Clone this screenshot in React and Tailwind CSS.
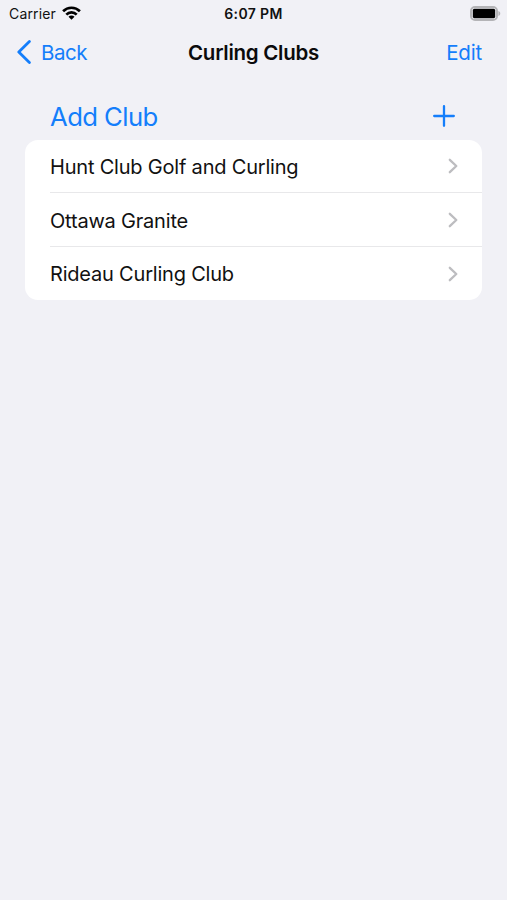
const clubs = ['Hunt Club Golf and Curling', 'Ottawa Granite', 'Rideau Curling Club'];

function StatusBar() {
  return (
    <div className="grid h-7 grid-cols-[1fr_auto_1fr] items-center pl-[9px] pr-1.5 text-[#111]">
      <div className="-mt-px flex items-center gap-[6px]">
        <span className="text-[14px] tracking-[0.15px]">Carrier</span>
        <svg className="-mt-px" width="19" height="14" viewBox="0 0 19 14" fill="none" stroke="#000" strokeWidth="2.7">
          <path d="M1.1 5.2a12 12 0 0 1 16.8 0" />
          <path d="M4.3 8.6a7.4 7.4 0 0 1 10.4 0" />
          <path d="M9.5 13.8 6.5 10.8a4.2 4.2 0 0 1 6 0z" fill="#000" stroke="none" />
        </svg>
      </div>
      <span className="-mt-0.5 -ml-[3px] text-[14px] font-semibold tracking-[0.35px]">6:07 PM</span>
      <svg className="-mt-0.5 justify-self-end" width="31" height="15" viewBox="0 0 31 15">
        <rect x="1" y="1" width="26" height="13" rx="4" fill="none" stroke="#b4b4b7" strokeWidth="2" />
        <rect x="2.8" y="2.8" width="22.4" height="9.4" rx="1.6" fill="#000" />
        <path d="M28.4 5c2.5 1 2.5 4 0 5z" fill="#b4b4b7" />
      </svg>
    </div>
  );
}

export default function App() {
  return (
    <main className="h-[900px] w-[507px] overflow-hidden bg-[#f1f1f6] font-['Inter',sans-serif] whitespace-nowrap">
      <StatusBar />
      <header className="grid h-[50px] grid-cols-[1fr_auto_1fr] items-center px-[17px] text-[20.5px] tracking-[-0.45px] text-[#147efb]">
        <button className="flex items-center gap-[10px]">
          <svg className="-mt-0.5" width="14" height="24" viewBox="0 0 14 24" fill="none" stroke="currentColor" strokeWidth="2.8" strokeLinecap="round" strokeLinejoin="round">
            <path d="M12.4 1.6 1.8 12l10.6 10.4" />
          </svg>
          <span>Back</span>
        </button>
        <h1 className="text-center font-semibold tracking-[-0.27px] text-[#0b0b0c]">Curling Clubs</h1>
        <button className="mr-2 justify-self-end tracking-[-0.2px]">Edit</button>
      </header>

      <section className="mx-[25px] mt-[15px]">
        <button className="flex h-[46.5px] w-full items-center justify-between pl-[25px] pr-[27.5px] text-[25.7px] tracking-[-0.58px] text-[#147efb]">
          <span className="pt-0.5">Add Club</span>
          <svg width="22" height="22" viewBox="0 0 22 22" fill="none" stroke="currentColor" strokeWidth="2.3" strokeLinecap="round">
            <path d="M11 1.2v19.6M1.2 11h19.6" />
          </svg>
        </button>
        <ul className="overflow-hidden rounded-[13px] bg-white pl-[25px] text-[20px] tracking-[-0.2px] text-[#111]">
          {clubs.map((club) => (
            <li key={club} className="flex h-[53.7px] items-center justify-between border-b border-[#e8e8ea] pr-[24.5px] last:h-[53px] last:border-0">
              <span className="pt-[2.2px]">{club}</span>
              <svg className="mt-px" width="10" height="16" viewBox="0 0 10 16" fill="none" stroke="#bdbdc0" strokeWidth="2.3" strokeLinecap="round" strokeLinejoin="round">
                <path d="m1.8 1.8 6.5 6.2-6.5 6.2" />
              </svg>
            </li>
          ))}
        </ul>
      </section>
    </main>
  );
}
